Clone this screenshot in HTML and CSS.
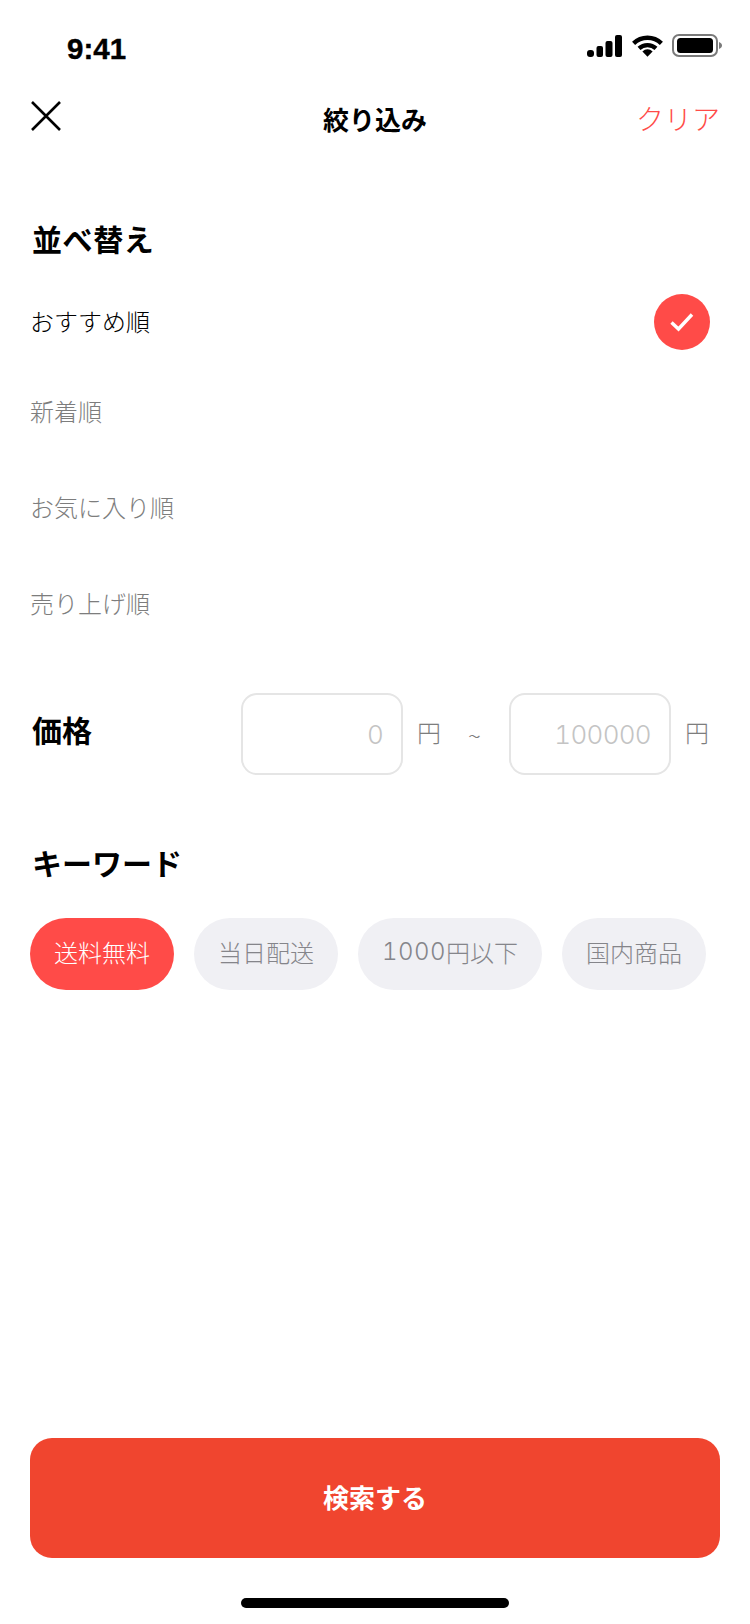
FILE: index.html
```html
<!DOCTYPE html>
<html lang="ja">
<head>
<meta charset="utf-8">
<title>絞り込み</title>
<link rel="stylesheet" href="styles.css">
</head>
<body>
<div class="screen">
  <div class="status">
    <span class="time">9:41</span>
    <div class="status-icons">
      <svg class="signal" width="35" height="22" viewBox="0 0 35 22"><rect x="0" y="15" width="7" height="7" rx="3" fill="#000"/><rect x="9.5" y="11" width="6.5" height="11" rx="2" fill="#000"/><rect x="18.5" y="6" width="7" height="16" rx="2" fill="#000"/><rect x="28" y="0" width="7" height="22" rx="2" fill="#000"/></svg>
      <svg class="wifi" width="31" height="23" viewBox="0 0 31 23"><path d="M1.6 9.4 A20 20 0 0 1 29.4 9.4" fill="none" stroke="#000" stroke-width="4.4"/><path d="M7 14.4 A12.4 12.4 0 0 1 24 14.4" fill="none" stroke="#000" stroke-width="4.2"/><path d="M10.4 17.4 A7.4 7.4 0 0 1 20.6 17.4 L15.5 22.8 Z" fill="#000"/></svg>
      <svg class="battery" width="50" height="23" viewBox="0 0 50 23"><rect x="1" y="1" width="44" height="21" rx="6" fill="none" stroke="#7a7a7a" stroke-width="2"/><rect x="5" y="4" width="36" height="15" rx="3.5" fill="#000"/><path d="M47 8 C49 8.8 50 10 50 11.5 C50 13 49 14.2 47 15 Z" fill="#7a7a7a"/></svg>
    </div>
  </div>
  <header class="nav">
    <svg class="close" width="32" height="32" viewBox="0 0 32 32"><path d="M2 2 L30 30 M30 2 L2 30" stroke="#000" stroke-width="2.6" fill="none"/></svg>
    <h1 class="nav-title">絞り込み</h1>
    <span class="clear">クリア</span>
  </header>
  <main class="content">
    <section class="sort">
      <h2 class="heading">並べ替え</h2>
      <div class="option option-active">
        <span class="option-label">おすすめ順</span>
        <span class="check"><svg width="28" height="28" viewBox="0 0 28 28"><path d="M3.5 14.5 L10.5 21 L24 6.5" fill="none" stroke="#fff" stroke-width="3.4"/></svg></span>
      </div>
      <div class="option"><span class="option-label">新着順</span></div>
      <div class="option"><span class="option-label">お気に入り順</span></div>
      <div class="option"><span class="option-label">売り上げ順</span></div>
    </section>
    <section class="price">
      <h2 class="heading">価格</h2>
      <div class="price-fields">
        <span class="field">0</span>
        <span class="unit">円</span>
        <span class="tilde">~</span>
        <span class="field">100000</span>
        <span class="unit">円</span>
      </div>
    </section>
    <section class="keyword">
      <h2 class="heading">キーワード</h2>
      <div class="chips">
        <span class="chip chip-active">送料無料</span>
        <span class="chip">当日配送</span>
        <span class="chip"><span class="num">1000</span>円以下</span>
        <span class="chip">国内商品</span>
      </div>
    </section>
  </main>
  <footer class="footer">
    <button class="search" type="button">検索する</button>
    <div class="home-bar"></div>
  </footer>
</div>
</body>
</html>
```
FILE: styles.css
```css
* { box-sizing: border-box; }
html, body { margin: 0; padding: 0; background: #fff; }
body {
  font-family: "Noto Sans CJK JP", "Liberation Sans", sans-serif;
  color: #000;
}
.screen {
  width: 750px;
  height: 1624px;
  display: flex;
  flex-direction: column;
  overflow: hidden;
}
.status {
  height: 88px;
  padding: 32px 28px 0 67px;
  display: flex;
  justify-content: space-between;
  align-items: flex-start;
}
.time {
  font-family: "Liberation Sans", sans-serif;
  font-weight: 700;
  font-size: 29.5px;
  line-height: 34px;
  -webkit-text-stroke: 0.4px #000;
}
.status-icons {
  display: flex;
  align-items: flex-end;
  gap: 9.5px;
  margin-top: 2px;
}
.nav {
  height: 64px;
  padding: 0 30px;
  display: flex;
  align-items: center;
  justify-content: space-between;
  position: relative;
}
.close { margin-top: -8px; }
.nav-title {
  position: absolute;
  left: 0;
  right: 0;
  top: 11px;
  margin: 0;
  text-align: center;
  font-size: 26px;
  line-height: 40px;
  font-weight: 700;
}
.clear {
  font-size: 28px;
  font-weight: 300;
  line-height: 40px;
  color: #ff4b48;
  margin-top: -4px;
}
.content {
  flex: 1;
  padding: 64px 30px 0 30px;
}
.heading {
  margin: 0;
  font-size: 30px;
  line-height: 44px;
  font-weight: 700;
  padding-left: 2px;
}
.sort .heading {
  margin-bottom: 34px;
  letter-spacing: 0.6px;
}
.option {
  height: 96px;
  display: flex;
  align-items: center;
  justify-content: space-between;
  font-size: 24px;
  font-weight: 300;
  color: #7d7d7d;
}
.option-label { padding-bottom: 2px; }
.option-active {
  height: 56px;
  color: #000;
  padding-right: 10px;
  margin-bottom: 13px;
}
.option-active .option-label { padding-bottom: 4px; }
.check {
  width: 56px;
  height: 56px;
  border-radius: 50%;
  background: #ff4b48;
  display: flex;
  align-items: center;
  justify-content: center;
}
.price {
  margin-top: 42px;
  height: 82px;
  display: flex;
  align-items: center;
  justify-content: space-between;
}
.price .heading { padding-bottom: 10px; }
.price-fields {
  display: flex;
  align-items: center;
  padding-right: 11px;
}
.field {
  width: 162px;
  height: 82px;
  border: 2px solid #e5e5e5;
  border-radius: 16px;
  display: flex;
  align-items: center;
  justify-content: flex-end;
  padding-right: 18px;
  font-family: "Inter", "Liberation Sans", sans-serif;
  font-variant-numeric: tabular-nums;
  font-size: 26px;
  font-weight: 300;
  letter-spacing: -0.7px;
  color: #c4c4c4;
}
.unit {
  font-size: 24px;
  font-weight: 300;
  color: #7d7d7d;
  margin-left: 14px;
  width: 24px;
  padding-bottom: 5px;
}
.tilde {
  font-size: 24px;
  font-weight: 300;
  color: #7d7d7d;
  margin: 0 27px 0 27px;
  width: 14px;
}
.keyword { margin-top: 65px; }
.keyword .heading { margin-bottom: 34px; }
.chips {
  display: flex;
  gap: 20px;
}
.chip {
  height: 72px;
  padding: 0 24px 5px;
  border-radius: 36px;
  background: #f0f0f4;
  color: #85858a;
  font-size: 24px;
  font-weight: 300;
  display: flex;
  align-items: center;
  justify-content: center;
}
.num {
  font-family: "Inter", "Liberation Sans", sans-serif;
  font-variant-numeric: tabular-nums;
  letter-spacing: 0.5px;
}
.chip-active {
  background: #ff4b48;
  color: #fff;
}
.footer {
  padding: 0 30px 16px;
  display: flex;
  flex-direction: column;
  align-items: center;
}
.search {
  width: 100%;
  height: 120px;
  border: 0;
  border-radius: 22px;
  background: #f0452f;
  color: #fff;
  font-family: inherit;
  font-size: 26px;
  font-weight: 700;
  padding: 0 0 4px;
}
.home-bar {
  width: 268px;
  height: 10px;
  border-radius: 5px;
  background: #000;
  margin-top: 40px;
}
```
